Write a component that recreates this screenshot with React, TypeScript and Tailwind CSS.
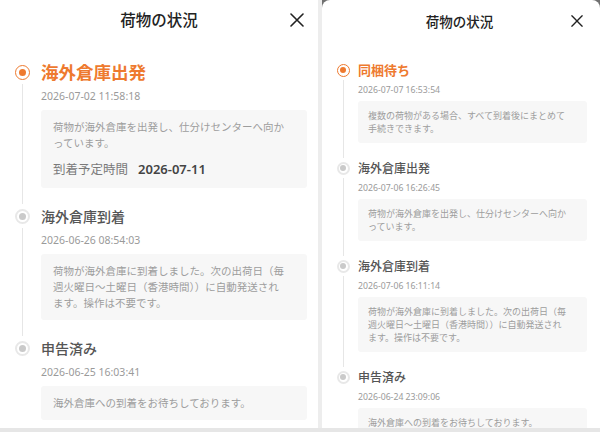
type Step = {
  title: string;
  time: string;
  lines: string[];
  eta?: string;
};

const departed = ["荷物が海外倉庫を出発し、仕分けセンターへ向か", "っています。"];
const arrived = [
  "荷物が海外倉庫に到着しました。次の出荷日（毎",
  "週火曜日～土曜日（香港時間））に自動発送され",
  "ます。操作は不要です。",
];
const declared = ["海外倉庫への到着をお待ちしております。"];

const earlier: Step[] = [
  { title: "海外倉庫出発", time: "2026-07-02 11:58:18", lines: departed, eta: "2026-07-11" },
  { title: "海外倉庫到着", time: "2026-06-26 08:54:03", lines: arrived },
  { title: "申告済み", time: "2026-06-25 16:03:41", lines: declared },
];

const later: Step[] = [
  {
    title: "同梱待ち",
    time: "2026-07-07 16:53:54",
    lines: ["複数の荷物がある場合、すべて到着後にまとめて", "手続きできます。"],
  },
  { title: "海外倉庫出発", time: "2026-07-06 16:26:45", lines: departed },
  { title: "海外倉庫到着", time: "2026-07-06 16:11:14", lines: arrived },
  { title: "申告済み", time: "2026-06-24 23:09:06", lines: declared },
];

const large = {
  header: "h-10 px-[14px]",
  heading: "text-[15.5px]",
  close: 14,
  list: "pt-5 pl-[14px] pr-[11px]",
  rail: "w-4",
  gap: "gap-[11px]",
  row: "h-6",
  dot: "size-[15px]",
  dotInner: "size-[7px]",
  activeTitle: "text-[17.5px] font-bold",
  title: "text-[14px] font-medium",
  time: "mt-[4px] text-[10.5px] leading-4",
  card: "mt-[6px] px-3 py-[9px] text-[10.5px] leading-4",
  item: "pb-4",
};

const small = {
  header: "h-[42px] pl-[14px] pr-[17px]",
  heading: "text-[13.5px]",
  close: 12,
  list: "pt-[18px] pl-[14px] pr-[13px]",
  rail: "w-[14px]",
  gap: "gap-2",
  row: "h-5",
  dot: "size-[13px]",
  dotInner: "size-[6px]",
  activeTitle: "text-[13px] font-bold",
  title: "text-[12px] font-medium",
  time: "mt-[4px] text-[8.7px] leading-3",
  card: "mt-[5px] px-[10px] py-2 text-[9px] leading-[13px]",
  item: "pb-[15px]",
};

type Size = typeof large;

function Dot({ active, s }: { active: boolean; s: Size }) {
  if (active) {
    return (
      <span className={`flex items-center justify-center rounded-full border-[1.5px] border-[#ee7a2f] bg-white ${s.dot}`}>
        <span className={`rounded-full bg-[#ee7a2f] ${s.dotInner}`} />
      </span>
    );
  }
  return (
    <span className={`flex items-center justify-center rounded-full border-2 border-[#e8e8e8] bg-white ${s.dot}`}>
      <span className={`rounded-full bg-[#cacaca] ${s.dotInner}`} />
    </span>
  );
}

function StepRow({ step, active, last, s }: { step: Step; active: boolean; last: boolean; s: Size }) {
  return (
    <div className={`flex ${s.gap}`}>
      <div className={`flex shrink-0 flex-col items-center ${s.rail}`}>
        <div className={`flex items-center ${s.row}`}>
          <Dot active={active} s={s} />
        </div>
        {!last && <div className="w-px flex-1 bg-[#e6e6e6]" />}
      </div>
      <div className={`min-w-0 flex-1 ${last ? "" : s.item}`}>
        <div
          className={`flex items-center whitespace-nowrap ${s.row} ${
            active ? `${s.activeTitle} text-[#ee7a2f]` : `${s.title} text-[#555]`
          }`}
        >
          {step.title}
        </div>
        <div className={`font-['Noto_Sans',sans-serif] text-[#9a9a9a] ${s.time}`}>{step.time}</div>
        <div className={`rounded-[3px] bg-[#f7f7f7] text-[#9d9d9d] ${s.card}`}>
          {step.lines.map((line) => (
            <div key={line} className="whitespace-nowrap">
              {line}
            </div>
          ))}
          {step.eta && (
            <div className="mt-2 flex h-5 items-center gap-[10px]">
              <span className="text-[12.5px] text-[#7a7a7a]">到着予定時間</span>
              <span className="font-['Noto_Sans',sans-serif] text-[13px] font-semibold text-[#444]">
                {step.eta}
              </span>
            </div>
          )}
        </div>
      </div>
    </div>
  );
}

function CloseIcon({ size }: { size: number }) {
  return (
    <svg width={size} height={size} viewBox="0 0 14 14" fill="none" stroke="#222" strokeWidth="1.6" strokeLinecap="round">
      <path d="M1 1L13 13M13 1L1 13" />
    </svg>
  );
}

function StatusSheet({ steps, s }: { steps: Step[]; s: Size }) {
  return (
    <div className="flex h-full flex-col overflow-hidden">
      <div className={`grid shrink-0 grid-cols-[1fr_auto_1fr] items-center ${s.header}`}>
        <span />
        <span className={`font-medium text-[#222] ${s.heading}`}>荷物の状況</span>
        <span className="flex justify-end">
          <CloseIcon size={s.close} />
        </span>
      </div>
      <div className={s.list}>
        {steps.map((step, i) => (
          <StepRow key={step.time} step={step} active={i === 0} last={i === steps.length - 1} s={s} />
        ))}
      </div>
    </div>
  );
}

export default function App() {
  return (
    <div className="flex h-[432px] w-[600px] flex-col overflow-hidden bg-white font-['Noto_Sans_CJK_JP','Noto_Sans',sans-serif]">
      <div className="flex min-h-0 flex-1">
        <div className="w-[318px] shrink-0 bg-white">
          <StatusSheet steps={earlier} s={large} />
        </div>
        <div className="w-1 shrink-0 bg-[#ededed]" />
        <div className="min-w-0 flex-1 bg-[#707070]">
          <div className="h-full rounded-t-[8px] bg-white">
            <StatusSheet steps={later} s={small} />
          </div>
        </div>
      </div>
      <div className="h-1 shrink-0 bg-[#e6e6e6]" />
    </div>
  );
}
